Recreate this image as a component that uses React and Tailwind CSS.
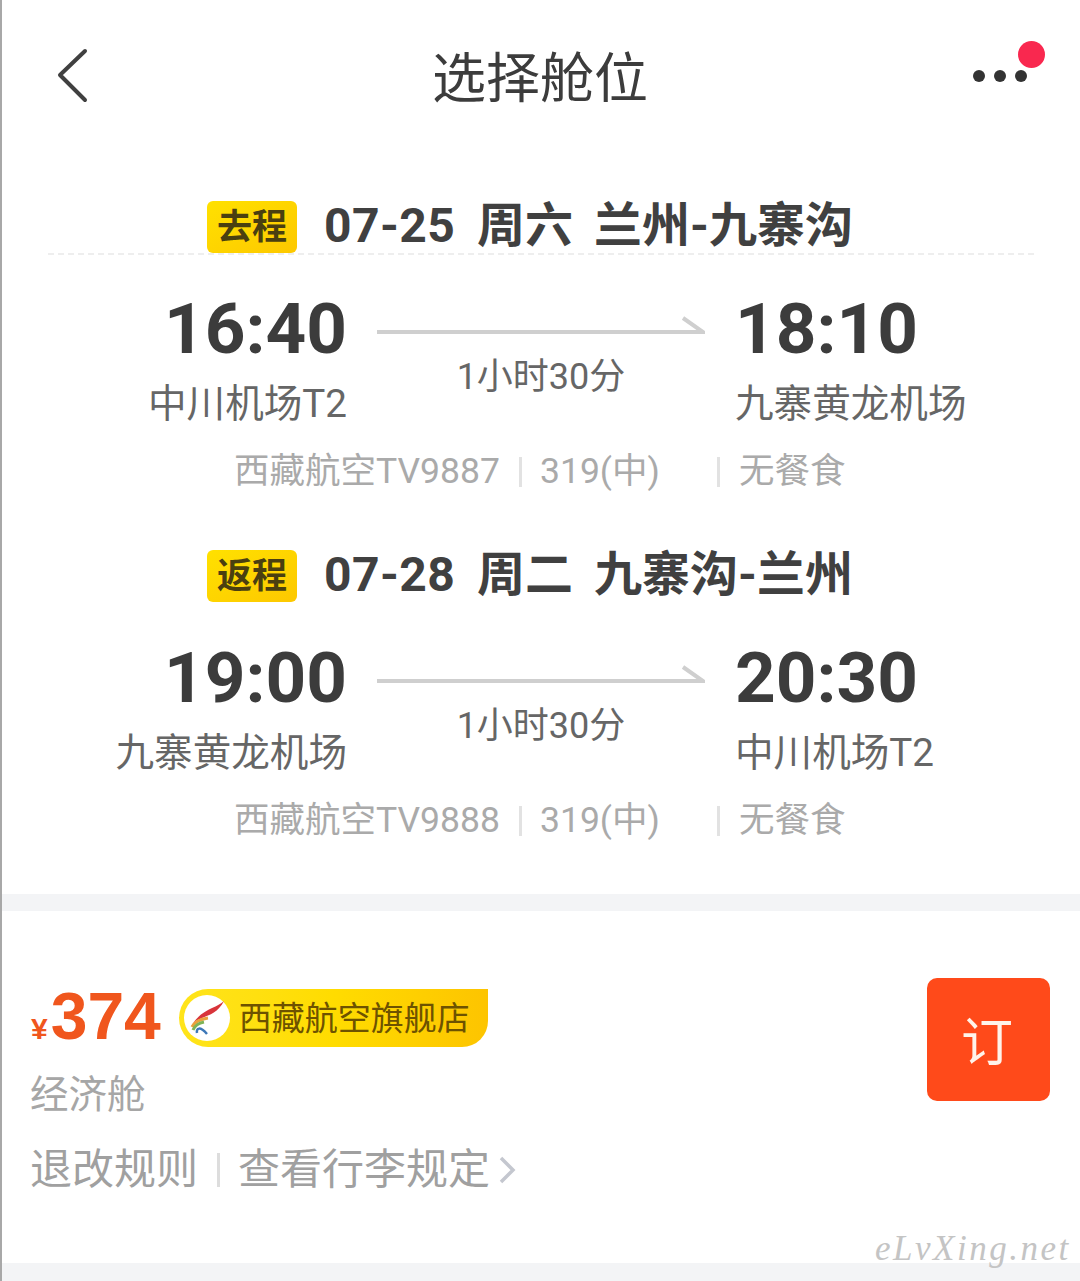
import React from "react";

const FONT = "font-['Roboto','Noto_Sans_CJK_SC',sans-serif]";

// one flight leg: heading + times + details
function Leg({ tag, date, day, route, dep, arr, from, to, flight, divider }) {
  return (
    <section className="relative">
      <div className="flex h-[52px] items-center pl-[205px]">
        <span className="flex h-[52px] w-[90px] items-center justify-center rounded-[6px] bg-gradient-to-br from-[#ffe100] to-[#fdc800] text-[35px] font-bold leading-none text-[#4a3f10]">
          {tag}
        </span>
        <div className="ml-[27px] flex pb-[3px] text-[48px] font-bold leading-none text-[#404040]">
          <span className="tracking-[0.4px]">{date}</span>
          <span className="ml-[22px]">{day}</span>
          <span className="ml-[21px]">{route}</span>
        </div>
      </div>
      {divider && (
        <div className="mx-[46px] h-0 border-t-2 border-dashed border-[#eeeeee]" />
      )}
      <div className={`${divider ? "mt-[32px]" : "mt-[34px]"} grid grid-cols-[345px_328px_1fr] gap-x-[30px]`}>
        <div className="flex flex-col items-end">
          <span className="text-[71px] font-bold leading-[84px] text-[#3c3c3c]">{dep}</span>
          <span className="mt-[8px] text-[38.6px] leading-[50px] text-[#666666]">{from}</span>
        </div>
        <div className="flex flex-col items-center pt-[27px]">
          <svg width="328" height="20" viewBox="0 0 328 20" fill="none">
            <path d="M0 18H326L306 4" stroke="#cfcfcf" strokeWidth="4" />
          </svg>
          <span className="mt-[21px] text-[36px] leading-[44px] text-[#666666]">1小时30分</span>
        </div>
        <div className="flex flex-col items-start">
          <span className="text-[71px] font-bold leading-[84px] text-[#3c3c3c]">{arr}</span>
          <span className="mt-[8px] text-[38.6px] leading-[50px] text-[#666666]">{to}</span>
        </div>
      </div>
      <div className="mt-[21px] flex h-[44px] items-center pl-[232px] text-[35.5px] leading-none text-[#aaaaaa]">
        <span className="w-[285px]">{flight}</span>
        <span className="h-[30px] w-[3px] bg-[#e2e2e2]" />
        <span className="ml-[18px] w-[177px]">319(中)</span>
        <span className="h-[30px] w-[3px] bg-[#e2e2e2]" />
        <span className="ml-[19px]">无餐食</span>
      </div>
    </section>
  );
}

export default function App() {
  return (
    <div className={`${FONT} relative flex h-[1281px] w-[1080px] flex-col overflow-hidden border-l-2 border-[#a8a8a8] bg-white`}>
      {/* nav bar */}
      <header className="relative flex h-[155px] items-center justify-center pt-[4px] pr-[2px]">
        <svg className="absolute left-[53px] top-[47px]" width="34" height="58" viewBox="0 0 34 58" fill="none">
          <path d="M30 4L5 28L30 53" stroke="#404040" strokeWidth="4" strokeLinecap="round" strokeLinejoin="round" />
        </svg>
        <h1 className="text-[54px] leading-none font-normal text-[#3c3c3c]">选择舱位</h1>
        <div className="absolute left-[971px] top-[70px] flex gap-[9px]">
          <span className="size-[12px] rounded-full bg-[#333333]" />
          <span className="size-[12px] rounded-full bg-[#333333]" />
          <span className="size-[12px] rounded-full bg-[#333333]" />
        </div>
        <span className="absolute left-[1016px] top-[41px] size-[27px] rounded-full bg-[#f9284f]" />
      </header>

      <div className="pt-[46px]">
        <Leg tag="去程" date="07-25" day="周六" route="兰州-九寨沟" dep="16:40" arr="18:10" from="中川机场T2" to="九寨黄龙机场" flight="西藏航空TV9887" divider />
      </div>
      <div className="pt-[56px]">
        <Leg tag="返程" date="07-28" day="周二" route="九寨沟-兰州" dep="19:00" arr="20:30" from="九寨黄龙机场" to="中川机场T2" flight="西藏航空TV9888" />
      </div>

      <div className="mt-auto">
        {/* cabin card */}
        <div className="h-[17px] bg-[#f3f4f6]" />
        <div className="flex h-[352px] items-start justify-between pl-[28px] pr-[30px] pt-[67px]">
          <div>
            <div className="flex h-[70px] items-center pt-[10px]">
              <span className="mt-[22px] ml-[1px] font-['Liberation_Sans',sans-serif] text-[30px] font-bold leading-none text-[#f0561d]">¥</span>
              <span className="ml-[3px] -mt-[4px] font-['Liberation_Sans',sans-serif] text-[66px] font-bold leading-none text-[#f0561d]">374</span>
              <div className="ml-[18px] flex h-[58px] w-[309px] items-center rounded-l-[29px] rounded-br-[26px] bg-gradient-to-r from-[#ffe41a] via-[#ffdc00] to-[#fdc400]">
                <span className="ml-[5px] flex size-[46px] items-center justify-center rounded-full bg-white">
                  <svg width="46" height="46" viewBox="0 0 46 46" fill="none">
                    <path d="M40 6C33 13 20 13 9 28C17 21 32 22 40 6Z" fill="#d8343a" />
                    <path d="M8 32C11 26 17 24 24 23" stroke="#e9a13b" strokeWidth="3" />
                    <path d="M9 35C11 30 15 28 20 27" stroke="#7fb356" strokeWidth="3" />
                    <path d="M13 38C12 33 16 31 23 39" stroke="#3d78b8" strokeWidth="2.5" />
                  </svg>
                </span>
                <span className="ml-[9px] text-[33px] leading-none text-[#6d5200]">西藏航空旗舰店</span>
              </div>
            </div>
            <div className="mt-[22px] text-[38.5px] leading-[50px] text-[#a6a6a6]">经济舱</div>
            <div className="mt-[23px] flex h-[54px] items-center text-[42px] leading-none text-[#a0a0a0]">
              <span>退改规则</span>
              <span className="ml-[19px] h-[34px] w-[3px] bg-[#dddddd]" />
              <span className="ml-[18px]">查看行李规定</span>
              <svg className="ml-[8px]" width="18" height="30" viewBox="0 0 18 30" fill="none">
                <path d="M3 3L15 15L3 27" stroke="#c4c7cf" strokeWidth="3.5" />
              </svg>
            </div>
          </div>
          <button className="flex size-[123px] items-center justify-center rounded-[10px] bg-[#ff4a1a] pr-[3px] pt-[8px] text-[52px] leading-none text-[#fff3ea]">
            订
          </button>
        </div>
        <div className="h-[18px] bg-[#f3f4f6]" />
      </div>

      <span className="absolute left-[873px] top-[1231px] font-['Liberation_Serif',serif] text-[35px] italic leading-none tracking-[2.5px] text-[#c4c4c4]">
        eLvXing.net
      </span>
    </div>
  );
}
